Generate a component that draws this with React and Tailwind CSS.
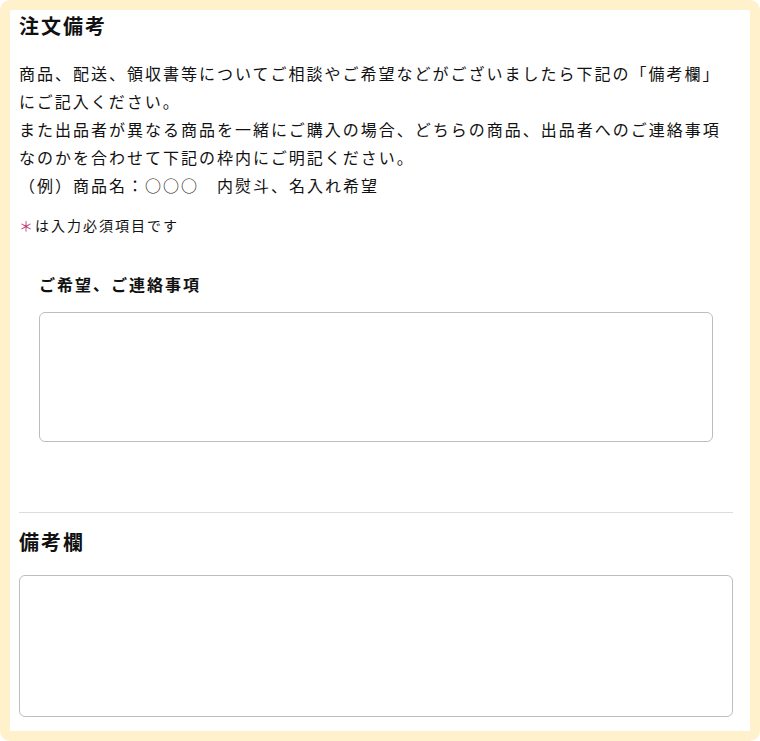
export default function App() {
  return (
    <div className="w-[760px] h-[741px] bg-white" style={{ fontFamily: '"Noto Sans CJK JP", "Noto Sans", sans-serif' }}>
      <div className="h-full rounded-[10px] bg-[#fff1cc] p-[10px]">
        <div className="h-full bg-white pl-[9px] pr-[17px] text-[#111] tracking-[2px]">
          <h2 className="text-[20px] font-bold leading-[32px]">注文備考</h2>
          <div className="mt-[17px] text-[16px] leading-[28px]">
            <p>商品、配送、領収書等についてご相談やご希望などがございましたら下記の「備考欄」にご記入ください。</p>
            <p>また出品者が異なる商品を一緒にご購入の場合、どちらの商品、出品者へのご連絡事項なのかを合わせて下記の枠内にご明記ください。</p>
            <p>（例）商品名：○○○　内熨斗、名入れ希望</p>
          </div>
          <p className="mt-[14px] text-[14px] leading-[24px]">
            <span className="text-[#c2407a]">＊</span>は入力必須項目です
          </p>
          <div className="px-[20px] pt-[35px] pb-[70px]">
            <div className="text-[16px] font-bold leading-[24px]">ご希望、ご連絡事項</div>
            <textarea className="mt-[16px] block h-[130px] w-full resize-none rounded-[6px] border border-[#bdbdbd] outline-none" />
          </div>
          <div className="border-t border-[#dddddd]" />
          <h2 className="pt-[14px] text-[20px] font-bold leading-[30px]">備考欄</h2>
          <textarea className="mt-[18px] block h-[142px] w-full resize-none rounded-[6px] border border-[#bdbdbd] outline-none" />
        </div>
      </div>
    </div>
  );
}
